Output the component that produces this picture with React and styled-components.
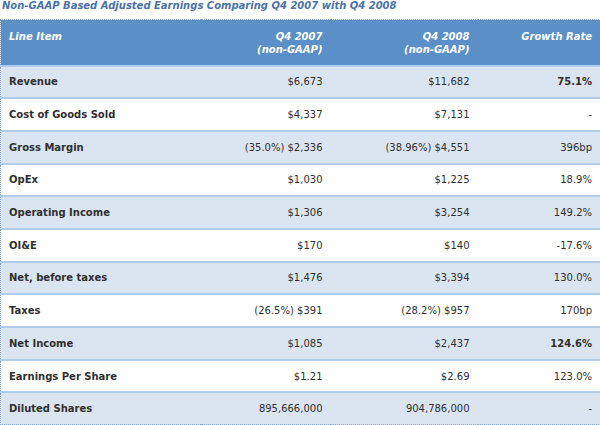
import React from 'react';
import styled, { createGlobalStyle } from 'styled-components';

const GlobalStyle = createGlobalStyle`
  html, body {
    margin: 0;
    padding: 0;
    background: #ffffff;
  }
  body {
    font-family: "DejaVu Sans", Verdana, sans-serif;
    font-size: 10px;
    color: #333333;
  }
`;

const Wrapper = styled.div`
  width: 600px;
`;

const Title = styled.h3`
  margin: 0 0 0 2px;
  height: 19px;
  line-height: 12px;
  font-size: 10px;
  font-weight: bold;
  font-style: italic;
  color: #4a72a8;
`;

const Table = styled.table`
  width: 600px;
  border-collapse: collapse;
  border: 1px dotted #7fa3d4;
  table-layout: fixed;
`;

const HeadCell = styled.th`
  height: 46px;
  padding: 10px 8px 0;
  box-sizing: border-box;
  vertical-align: top;
  background: #5b8fc7;
  color: #ffffff;
  font-style: italic;
  font-weight: bold;
  font-size: 10px;
  line-height: 13px;
  text-align: ${props => (props.left ? 'left' : 'right')};
`;

const Row = styled.tr`
  background: ${props => (props.alt ? '#dbe5f1' : '#ffffff')};
  border-top: 2px solid #b1cbea;
`;

const Cell = styled.td`
  height: 30.7px;
  padding: 0 8px;
  vertical-align: middle;
  font-size: 10px;
  line-height: 13px;
  text-align: ${props => (props.left ? 'left' : 'right')};
  font-weight: ${props => (props.bold ? 'bold' : 'normal')};
  color: #2f2f2f;
  white-space: nowrap;
`;

const rows = [
  { item: 'Revenue', q7: '$6,673', q8: '$11,682', growth: '75.1%', strong: true },
  { item: 'Cost of Goods Sold', q7: '$4,337', q8: '$7,131', growth: '-' },
  { item: 'Gross Margin', q7: '(35.0%) $2,336', q8: '(38.96%) $4,551', growth: '396bp' },
  { item: 'OpEx', q7: '$1,030', q8: '$1,225', growth: '18.9%' },
  { item: 'Operating Income', q7: '$1,306', q8: '$3,254', growth: '149.2%' },
  { item: 'OI&E', q7: '$170', q8: '$140', growth: '-17.6%' },
  { item: 'Net, before taxes', q7: '$1,476', q8: '$3,394', growth: '130.0%' },
  { item: 'Taxes', q7: '(26.5%) $391', q8: '(28.2%) $957', growth: '170bp' },
  { item: 'Net Income', q7: '$1,085', q8: '$2,437', growth: '124.6%', strong: true },
  { item: 'Earnings Per Share', q7: '$1.21', q8: '$2.69', growth: '123.0%' },
  { item: 'Diluted Shares', q7: '895,666,000', q8: '904,786,000', growth: '-' },
];

export default function App() {
  return (
    <Wrapper>
      <GlobalStyle />
      <Title>Non-GAAP Based Adjusted Earnings Comparing Q4 2007 with Q4 2008</Title>
      <Table>
        <colgroup>
          <col style={{ width: 200 }} />
          <col style={{ width: 130 }} />
          <col style={{ width: 147 }} />
          <col style={{ width: 123 }} />
        </colgroup>
        <thead>
          <tr>
            <HeadCell left>Line Item</HeadCell>
            <HeadCell>Q4 2007<br />(non-GAAP)</HeadCell>
            <HeadCell>Q4 2008<br />(non-GAAP)</HeadCell>
            <HeadCell>Growth Rate</HeadCell>
          </tr>
        </thead>
        <tbody>
          {rows.map((r, i) => (
            <Row key={r.item} alt={i % 2 === 0}>
              <Cell left bold>{r.item}</Cell>
              <Cell>{r.q7}</Cell>
              <Cell>{r.q8}</Cell>
              <Cell bold={r.strong}>{r.growth}</Cell>
            </Row>
          ))}
        </tbody>
      </Table>
    </Wrapper>
  );
}
